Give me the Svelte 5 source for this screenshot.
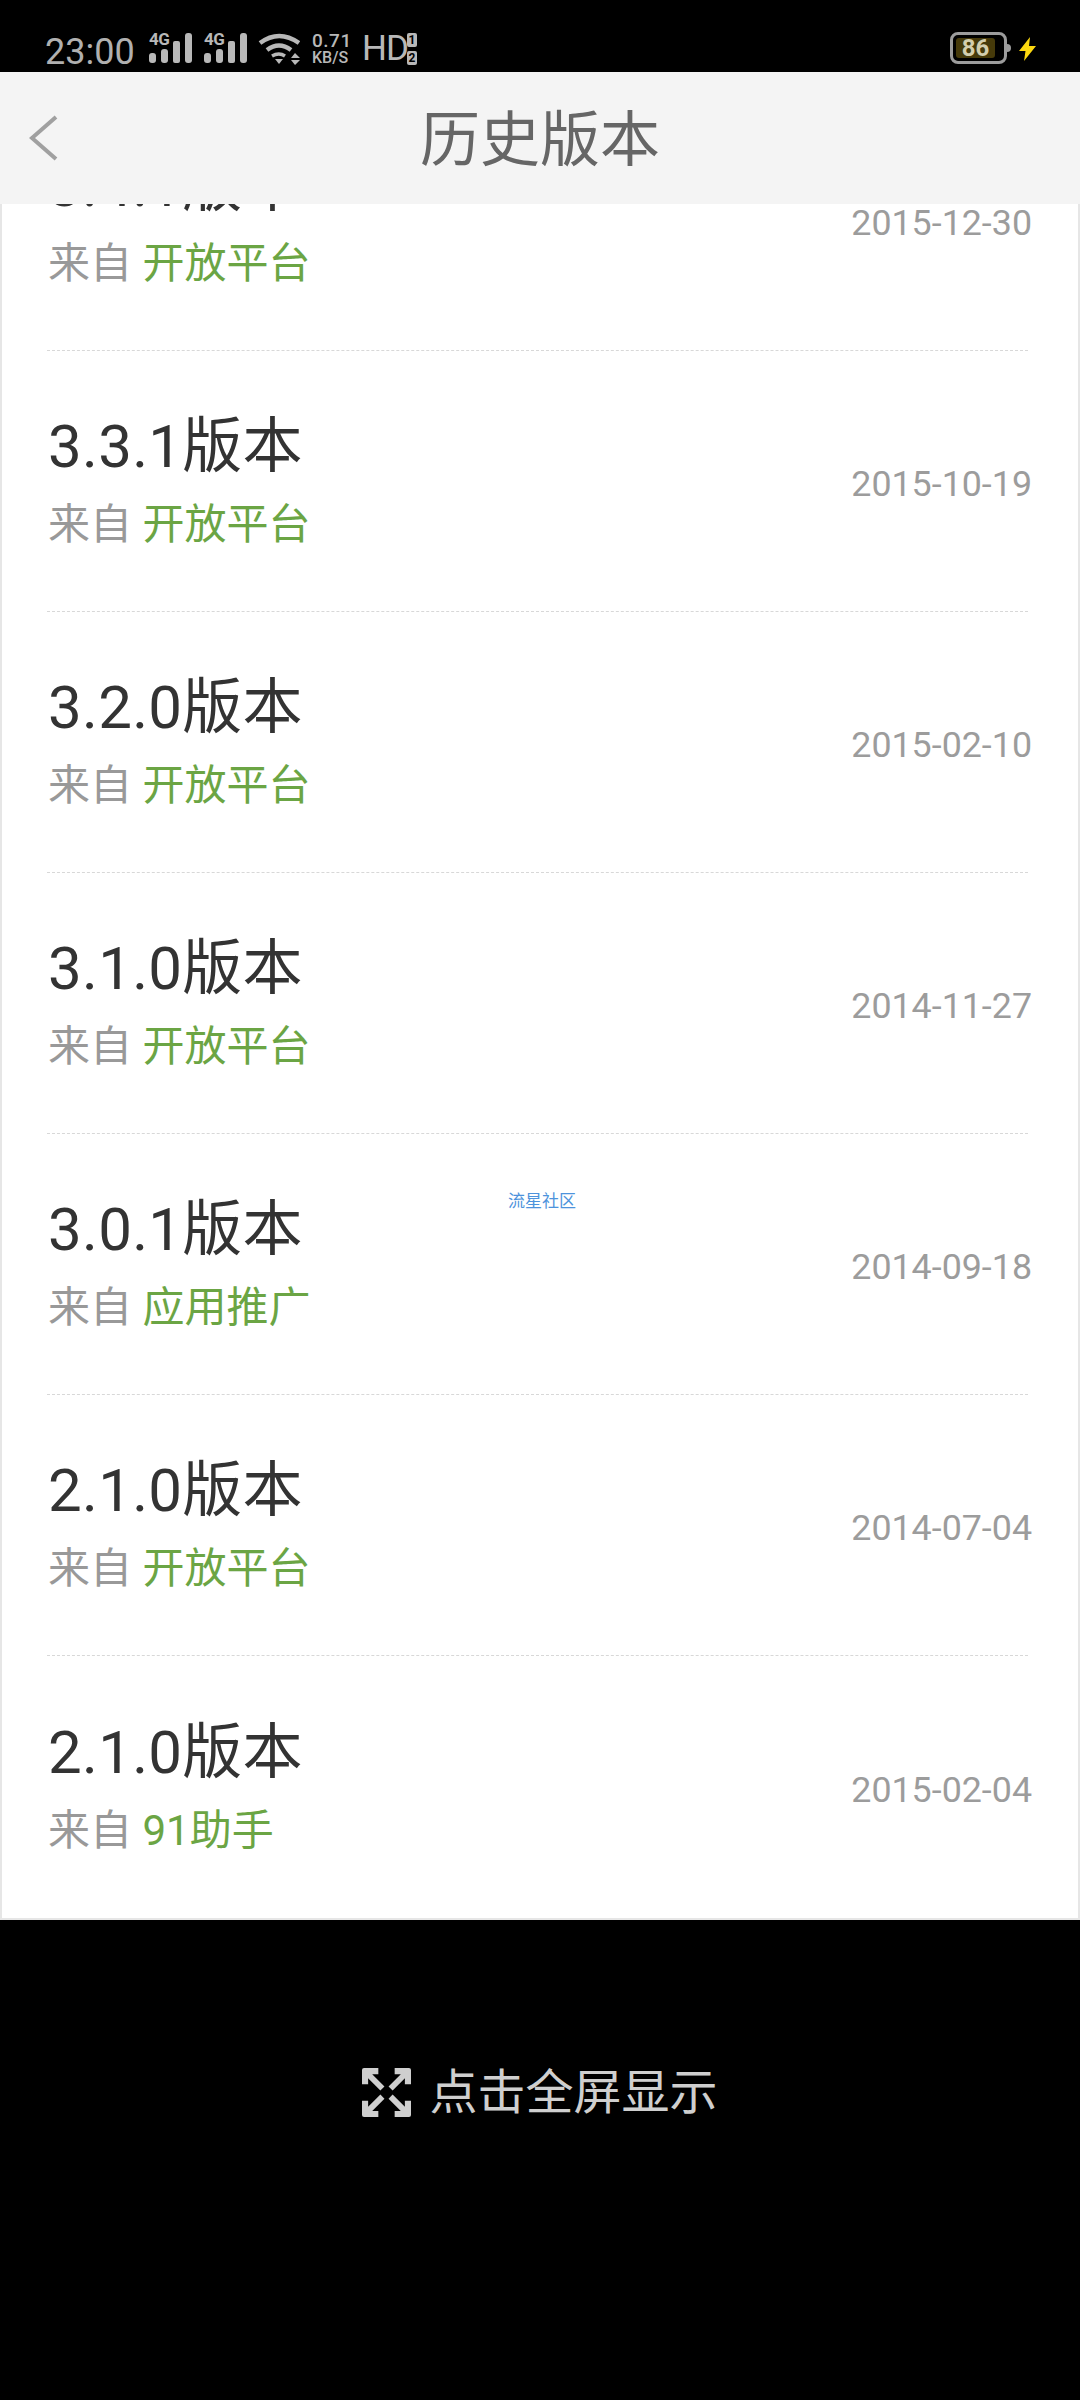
<script>
  const rows = [
    { v: '3.4.1', src: '开放平台', date: '2015-12-30' },
    { v: '3.3.1', src: '开放平台', date: '2015-10-19' },
    { v: '3.2.0', src: '开放平台', date: '2015-02-10' },
    { v: '3.1.0', src: '开放平台', date: '2014-11-27' },
    { v: '3.0.1', src: '应用推广', date: '2014-09-18' },
    { v: '2.1.0', src: '开放平台', date: '2014-07-04' },
    { v: '2.1.0', src: '91助手', date: '2015-02-04' }
  ];
</script>

{#snippet signal()}
  <div class="signal">
    <span class="net">4G</span>
    <svg width="44" height="30" viewBox="0 0 44 30" fill="#b8b8b8">
      <rect x="1" y="20" width="7" height="10" rx="3" />
      <rect x="13" y="16" width="7" height="14" rx="3" />
      <rect x="25" y="8" width="7" height="22" rx="2" />
      <rect x="37" y="0" width="7" height="30" rx="3" />
    </svg>
  </div>
{/snippet}

<div class="screen">
  <header class="status">
    <div class="status-left">
      <span class="time">23:00</span>
      {@render signal()}
      {@render signal()}
      <svg class="wifi" width="42" height="32" viewBox="0 0 42 32" fill="none" stroke="#b8b8b8" stroke-width="4.500">
        <path d="M2 10 Q21 -4 41 10" />
        <path d="M9 17 Q21 8 33 17" />
        <path d="M14 23 Q21 19 27 23" stroke-width="3.500" />
        <path d="M17 26 L25 26 L21 31 Z" fill="#b8b8b8" stroke="none" />
        <path d="M33 25 L37 20 L42 25 Z M33 27 L42 27 L37 32 Z" fill="#b8b8b8" stroke="none" />
      </svg>
      <div class="speed"><span class="rate">0.71</span><span class="unit">KB/S</span></div>
      <span class="hd">HD</span>
      <div class="sims"><span>1</span><span>2</span></div>
    </div>
    <div class="status-right">
      <div class="battery">
        <div class="level">86</div>
        <i class="cap"></i>
      </div>
      <svg width="17" height="24" viewBox="0 0 17 24" fill="#fcd80f">
        <path d="M11 0 L0 14 L6.500 14 L5 24 L17 9 L10 9 Z" />
      </svg>
    </div>
  </header>

  <div class="navbar">
    <svg class="back" width="30" height="46" viewBox="0 0 30 46" fill="none" stroke="#a0a0a0" stroke-width="4">
      <path d="M27 2 L3 23 L27 44" />
    </svg>
    <h1>历史版本</h1>
  </div>

  <main class="content">
    <ul class="list">
      {#each rows as r}
        <li class="row">
          <div class="info">
            <div class="title">{r.v}版本</div>
            <div class="from">来自 <span class="src">{r.src}</span></div>
          </div>
          <div class="date">{r.date}</div>
        </li>
      {/each}
    </ul>
    <span class="mark">流星社区</span>
  </main>

  <footer class="foot">
    <div class="full">
      <svg width="49" height="49" viewBox="0 0 48 48" fill="#cfcfcf">
        <path d="M0 2 Q0 0 2 0 H16 V6 H10 L22 18 L18 22 L6 10 V16 H0 Z" />
        <path d="M48 2 Q48 0 46 0 H32 V6 H38 L26 18 L30 22 L42 10 V16 H48 Z" />
        <path d="M0 46 Q0 48 2 48 H16 V42 H10 L22 30 L18 26 L6 38 V32 H0 Z" />
        <path d="M48 46 Q48 48 46 48 H32 V42 H38 L26 30 L30 26 L42 38 V32 H48 Z" />
      </svg>
      <span class="full-label">点击全屏显示</span>
    </div>
  </footer>
</div>

<style>
  :global(body) {
    margin: 0;
    background: #000;
  }
  .screen {
    width: 1080px;
    height: 2400px;
    display: flex;
    flex-direction: column;
    background: #000;
    font-family: Roboto, "Noto Sans CJK SC", sans-serif;
  }
  .status {
    height: 72px;
    flex: none;
    display: flex;
    justify-content: space-between;
    padding: 0 44px 0 45px;
    box-sizing: border-box;
    color: #b8b8b8;
  }
  .status-left {
    display: flex;
    align-items: flex-start;
    padding-top: 33px;
  }
  .time {
    font-size: 36px;
    line-height: 36px;
    margin-top: 1px;
    width: 103px;
    color: #b0b0b0;
  }
  .signal {
    position: relative;
    width: 44px;
    height: 30px;
    margin-right: 11px;
  }
  .net {
    position: absolute;
    left: 1px;
    top: 0;
    font-size: 17px;
    line-height: 13px;
    font-weight: 700;
    letter-spacing: -0.5px;
  }
  .signal svg {
    display: block;
  }
  .wifi {
    margin-right: 12px;
  }
  .speed {
    width: 50px;
    display: flex;
    flex-direction: column;
    gap: 3px;
    font-weight: 500;
    white-space: nowrap;
  }
  .rate {
    font-size: 19px;
    line-height: 15px;
    letter-spacing: 0.5px;
  }
  .unit {
    font-size: 16px;
    line-height: 13px;
  }
  .hd {
    font-size: 35px;
    line-height: 30px;
    width: 45px;
    margin-top: 1px;
    letter-spacing: -1px;
  }
  .sims {
    display: flex;
    flex-direction: column;
    gap: 4px;
  }
  .sims span {
    width: 10px;
    height: 14px;
    border-radius: 2px;
    background: #b8b8b8;
    color: #000;
    font-size: 12px;
    line-height: 14px;
    font-weight: 700;
    text-align: center;
  }
  .status-right {
    display: flex;
    align-items: flex-start;
    padding-top: 32px;
  }
  .status-right svg {
    margin-top: 5px;
  }
  .battery {
    position: relative;
    width: 57px;
    height: 32px;
    box-sizing: border-box;
    border: 3px solid #9c9c9c;
    border-radius: 8px;
    padding: 3px;
    margin-right: 12px;
  }
  .level {
    height: 20px;
    width: 39px;
    border-radius: 3px;
    background: #463a0a;
    color: #d3ceae;
    font-size: 24px;
    line-height: 21px;
    font-weight: 700;
    text-align: center;
  }
  .cap {
    position: absolute;
    right: -7px;
    top: 9px;
    width: 4px;
    height: 8px;
    border-radius: 0 4px 4px 0;
    background: #9c9c9c;
  }
  .navbar {
    height: 132px;
    flex: none;
    position: relative;
    z-index: 1;
    display: flex;
    align-items: center;
    justify-content: center;
    background: #f4f4f4;
  }
  .back {
    position: absolute;
    left: 29px;
    top: 43px;
  }
  h1 {
    margin: 0;
    padding-top: 5px;
    font-size: 60px;
    font-weight: 400;
    color: #666;
    line-height: 1;
  }
  .content {
    position: relative;
    height: 1716px;
    flex: none;
    overflow: hidden;
    box-sizing: border-box;
    background: #fff;
    border-left: 2px solid #e6e6e6;
    border-right: 2px solid #e6e6e6;
    border-bottom: 2px solid #e6e6e6;
  }
  .list {
    list-style: none;
    margin: -114px 0 0;
    padding: 0 0 0 45px;
  }
  .row {
    width: 981px;
    height: 261px;
    box-sizing: border-box;
    display: flex;
    align-items: center;
    justify-content: space-between;
    border-bottom: 1px dashed #d8d8d8;
    padding: 0 0 0 1px;
  }
  .row:last-child {
    border-bottom: 0;
  }
  .info {
    display: flex;
    flex-direction: column;
    gap: 17px;
    padding-bottom: 1px;
  }
  .title {
    font-size: 60px;
    line-height: 72px;
    letter-spacing: 0.300px;
    color: #333;
  }
  .from {
    font-size: 42px;
    line-height: 50px;
    color: #999;
  }
  .src {
    color: #6ba544;
  }
  .date {
    font-size: 35.800px;
    color: #9c9c9c;
    margin-right: -4px;
    padding-top: 6px;
    white-space: nowrap;
  }
  .mark {
    position: absolute;
    left: 506px;
    top: 987px;
    font-size: 17px;
    line-height: 20px;
    color: #4d93dc;
  }
  .foot {
    flex: 1;
    display: flex;
    justify-content: center;
    padding-top: 146px;
  }
  .full {
    height: 52px;
    display: flex;
    align-items: center;
    gap: 18px;
    color: #cfcfcf;
    font-size: 48px;
    line-height: 52px;
  }
  .full-label {
    padding-top: 2px;
  }
</style>
